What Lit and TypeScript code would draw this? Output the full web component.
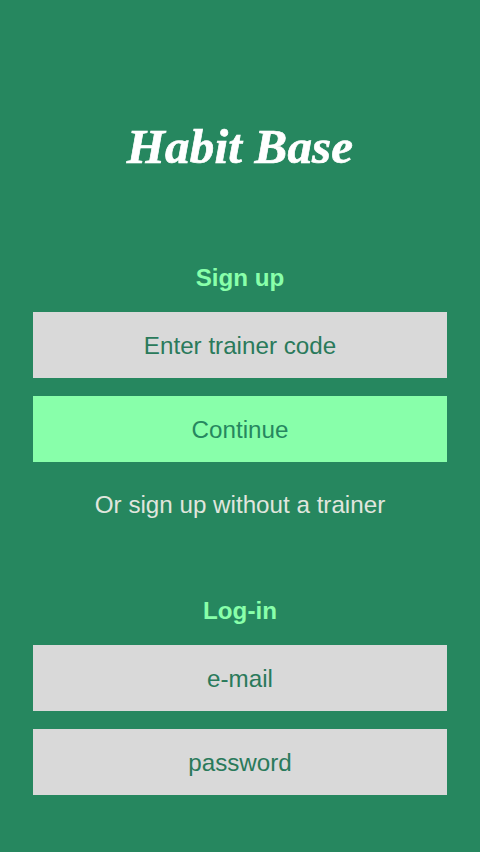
import { LitElement, html, css } from "lit";
import { customElement } from "lit/decorators.js";

@customElement("app-root")
export class AppRoot extends LitElement {
  static styles = css`
    :host {
      display: block;
      width: 480px;
      height: 852px;
      overflow: hidden;
      background: #26875f;
      font-family: "Liberation Sans", Arial, sans-serif;
      font-size: 24.2px;
      text-align: center;
    }
    .page {
      display: flex;
      flex-direction: column;
      padding: 120px 33px 0;
    }
    .logo {
      height: 54px;
      line-height: 54px;
      font-family: "Liberation Serif", serif;
      font-style: italic;
      font-weight: 700;
      font-size: 49px;
      letter-spacing: 0.2px;
      -webkit-text-stroke: 0.7px #fff;
      color: #fff;
      white-space: nowrap;
      margin-bottom: 90px;
    }
    .heading {
      height: 28px;
      line-height: 28px;
      margin-bottom: 20px;
      font-weight: 700;
      color: #88ffaa;
    }
    .box {
      height: 66px;
      line-height: 68px;
      background: #d9d9d9;
      color: #2a7a5b;
    }
    .box + .box { margin-top: 18px; }
    .primary { background: #88ffaa; color: #26875f; }
    .alt {
      height: 86px;
      line-height: 86px;
      color: #e0e6de;
      margin-bottom: 49px;
    }
  `;

  render() {
    return html`
      <div class="page">
        <div class="logo">Habit Base</div>
        <div class="heading">Sign up</div>
        <div class="box">Enter trainer code</div>
        <div class="box primary">Continue</div>
        <div class="alt">Or sign up without a trainer</div>
        <div class="heading">Log-in</div>
        <div class="box">e-mail</div>
        <div class="box">password</div>
      </div>
    `;
  }
}
